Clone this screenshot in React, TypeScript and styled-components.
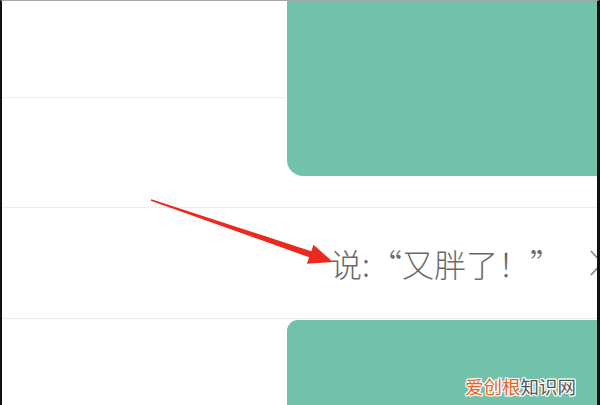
import * as React from 'react';
import styled, { createGlobalStyle } from 'styled-components';

const GlobalStyle = createGlobalStyle`
  html, body {
    margin: 0;
    padding: 0;
    background: #fff;
  }
  body {
    font-family: "Noto Sans CJK SC", "Noto Sans", sans-serif;
  }
`;

const TEAL = '#72c1ab';

const Frame = styled.div`
  position: relative;
  width: 600px;
  height: 405px;
  box-sizing: border-box;
  border-left: 2px solid #111;
  border-right: 3px solid #111;
  border-top: 1px solid rgba(0, 0, 0, 0.35);
  overflow: hidden;
  background: #fff;
`;

const TopSection = styled.div`
  display: grid;
  grid-template-columns: 283px 1fr;
  height: 206px;
  border-bottom: 1px solid #ececec;
`;

const LeftColumn = styled.div`
  display: flex;
  flex-direction: column;
`;

const BlankRow = styled.div<{ $h: number; $line?: boolean }>`
  height: ${(p) => p.$h}px;
  border-bottom: ${(p) => (p.$line ? '1px solid #eeeeee' : 'none')};
`;

const Bubble = styled.div<{ $corner: 'top' | 'bottom'; $h: number }>`
  height: ${(p) => p.$h}px;
  background: ${TEAL};
  border-radius: ${(p) => (p.$corner === 'bottom' ? '0 0 0 16px' : '11px 0 0 0')};
`;

const TopBubbleWrap = styled.div`
  padding-left: 2px;
  margin-top: -1px;
`;

const MessageRow = styled.div`
  display: flex;
  align-items: center;
  height: 110px;
  padding-left: 328px;
  border-bottom: 1px solid #ececec;
  white-space: nowrap;
`;

const MessageText = styled.span`
  font-size: 32px;
  font-weight: 300;
  line-height: 1;
  color: #6b6b6b;
  letter-spacing: 0;
`;

const Chevron = styled.svg`
  margin-left: 28px;
  flex: none;
`;

const BottomSection = styled.div`
  padding: 1px 0 0 285px;
`;

const Watermark = styled.div`
  position: absolute;
  right: 21px;
  bottom: 10px;
  font-size: 18.5px;
  line-height: 1;
  letter-spacing: 0;
  text-shadow: 1px 0 #fff, -1px 0 #fff, 0 1px #fff, 0 -1px #fff, 1px 1px #fff,
    -1px -1px #fff, 1px -1px #fff, -1px 1px #fff;
`;

const Mark = styled.span<{ $c: string }>`
  color: ${(p) => p.$c};
`;

const ArrowLayer = styled.svg`
  position: absolute;
  left: -2px;
  top: -1px;
  pointer-events: none;
`;

const Arrow = () => (
  <ArrowLayer width="600" height="405" viewBox="0 0 600 405">
    <polygon
      points="151.3,199.2 311.3,251.2 313.5,244.8 333,262 307,263.7 309.2,257.3 150.7,200.8"
      fill="#ea2a1e"
    />
  </ArrowLayer>
);

export default function App() {
  return (
    <>
      <GlobalStyle />
      <Frame lang="zh-CN">
        <TopSection>
          <LeftColumn>
            <BlankRow $h={96} $line />
            <BlankRow $h={109} />
          </LeftColumn>
          <TopBubbleWrap>
            <Bubble $corner="bottom" $h={176} />
          </TopBubbleWrap>
        </TopSection>
        <MessageRow>
          <MessageText>说:“又胖了！”</MessageText>
          <Chevron width="14" height="28" viewBox="0 0 14 28">
            <polyline points="1,2 12,14 1,26" fill="none" stroke="#888" strokeWidth="1.6" />
          </Chevron>
        </MessageRow>
        <BottomSection>
          <Bubble $corner="top" $h={90} />
        </BottomSection>
        <Arrow />
        <Watermark>
          <Mark $c="#e8631e">爱创根</Mark>
          <Mark $c="#555">知识网</Mark>
        </Watermark>
      </Frame>
    </>
  );
}
